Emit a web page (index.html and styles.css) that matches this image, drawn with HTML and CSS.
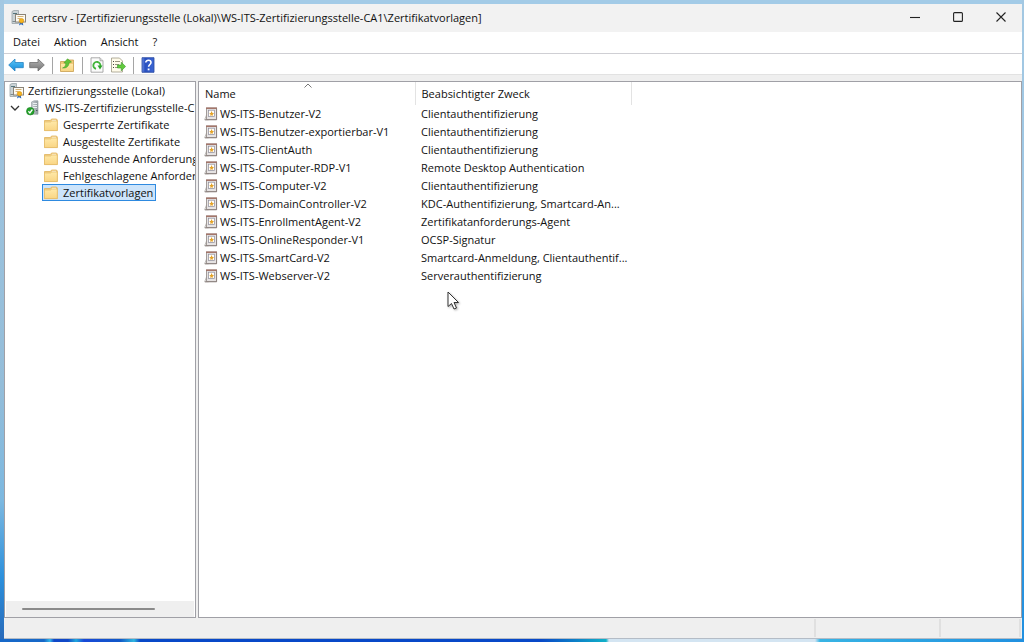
FILE: index.html
```html
<!DOCTYPE html>
<html lang="de">
<head>
<meta charset="utf-8">
<meta name="viewport" content="width=device-width, initial-scale=1">
<title>certsrv</title>
<link rel="stylesheet" href="styles.css">
</head>
<body>
<svg class="sprite" aria-hidden="true">
  <defs>
    <linearGradient id="g-folder" x1="0" y1="0" x2="0" y2="1"><stop offset="0" stop-color="#ffe9a9"/><stop offset="1" stop-color="#f9d584"/></linearGradient>
    <linearGradient id="g-blue" x1="0" y1="0" x2="0" y2="1"><stop offset="0" stop-color="#5cc8f8"/><stop offset="1" stop-color="#1288d8"/></linearGradient>
    <linearGradient id="g-grey" x1="0" y1="0" x2="0" y2="1"><stop offset="0" stop-color="#b4b4b4"/><stop offset="1" stop-color="#747474"/></linearGradient>
    <linearGradient id="g-help" x1="0" y1="0" x2="1" y2="0"><stop offset="0" stop-color="#6f8fe6"/><stop offset="0.25" stop-color="#2950c0"/><stop offset="1" stop-color="#3c66d4"/></linearGradient>
    <linearGradient id="g-server" x1="0" y1="0" x2="1" y2="0"><stop offset="0" stop-color="#c9d0d3"/><stop offset="1" stop-color="#8f999e"/></linearGradient>
  </defs>
  <symbol id="i-app" viewBox="0 0 16 16">
    <path d="M1 1.500 3 .5h4.500v13H1z" fill="#cbd3d6" stroke="#9aa4a8" stroke-width=".8"/>
    <path d="M2 3.500h4" stroke="#54747c"/>
    <path d="M1.500 11.500h3" stroke="#7c888c"/>
    <rect x="4.500" y="4.500" width="10" height="7.500" fill="#fdfbf3" stroke="#8a8378"/>
    <path d="M6.500 6.500h6M6.500 8.500h3" stroke="#d3b27c"/>
    <path d="m9 11-1 4.500 2-1.200 2.300 1.200L11.500 11z" fill="#2d6cc0"/>
    <circle cx="10.500" cy="10.800" r="2.300" fill="#f6b51e" stroke="#d68b0c" stroke-width=".6"/>
  </symbol>
  <symbol id="i-ca" viewBox="0 0 14 16">
    <path d="M5.500 2 8 .8h4v13.400H5.500z" fill="url(#g-server)" stroke="#9aa4a8" stroke-width=".7"/>
    <path d="M7 3.500h4M7 5.500h4M7 7.500h4" stroke="#e9eef0"/>
    <path d="M10 10.500h1.500" stroke="#4a5b62"/>
    <circle cx="4.300" cy="11.200" r="3.800" fill="#25a22c" stroke="#15801c" stroke-width=".6"/>
    <path d="m2.400 11.300 1.500 1.600 2.500-3.400" fill="none" stroke="#fff" stroke-width="1.300"/>
  </symbol>
  <symbol id="i-folder" viewBox="0 0 16 16">
    <path d="M1.500 3.500h6l1-1.500h5l.8 1v10.500H1.500z" fill="#f5d18a" stroke="#dfb25a" stroke-width=".8"/>
    <path d="M9 3.400h4" stroke="#fff9e8"/>
    <path d="M1.500 5h6l1.300-1h5.500v9.600H1.500z" fill="url(#g-folder)" stroke="#e4bc68" stroke-width=".7"/>
  </symbol>
  <symbol id="i-template" viewBox="0 0 14 14">
    <path d="M.6 12.800 2.500 8h2v4.800z" fill="#f1efed" stroke="#aaa6a3" stroke-width=".7"/>
    <rect x="2.500" y="1" width="10" height="11.500" fill="#e6e3e3" stroke="#99928f" stroke-width=".9"/>
    <path d="M2.100 1.200h10.900" stroke="#a0695c" stroke-width="1.300"/>
    <path d="M12.600 1.500v11.300H1" fill="none" stroke="#8b7f7c" stroke-width=".9"/>
    <rect x="4.500" y="3.200" width="6" height="6.300" fill="#fffdfa" stroke="#8b8b99" stroke-width=".7"/>
    <path d="m7.500 4 1 2h1.500L8.800 7.400l-.3 1.600-1-.7-1.300.7.300-1.600L5.300 6h1.500z" fill="#e3a32a"/>
  </symbol>
  <symbol id="i-back" viewBox="0 0 16 16">
    <path d="M.7 8 7 2v3.500h8.300v5.200H7V14z" fill="url(#g-blue)" stroke="#2683c2" stroke-width=".8"/>
  </symbol>
  <symbol id="i-forward" viewBox="0 0 16 16">
    <path d="M15.300 8 9 2v3.500H.7v5.200H9V14z" fill="url(#g-grey)" stroke="#6e6e6e" stroke-width=".8"/>
  </symbol>
  <symbol id="i-up" viewBox="0 0 16 16">
    <path d="M1.500 4.500h6L9 3h5.500v11.500h-13z" fill="#f2ca78" stroke="#c9a04f" stroke-width=".8"/>
    <path d="M2 7h12v7H2z" fill="url(#g-folder)"/>
    <path d="M3.500 11C6 10.200 6.800 8.500 6.700 6H4.800L8.500 1.800 12.500 5l-2.400.7C10 9 7.500 11.500 3.500 11z" fill="#62c238" stroke="#3d9a25" stroke-width=".5"/>
  </symbol>
  <symbol id="i-refresh" viewBox="0 0 16 16">
    <path d="M2 .8h9l3 3v11.400H2z" fill="#fbfbfb" stroke="#969696" stroke-width=".8"/>
    <path d="M11 .8v3h3" fill="#ddd" stroke="#999" stroke-width=".7"/>
    <path d="M7 11.800A3.500 3.500 0 1 1 11.300 9" fill="none" stroke="#43b53b" stroke-width="1.900"/>
    <path d="M8.500 8.500h5l-2.500 4z" fill="#2da32c"/>
  </symbol>
  <symbol id="i-export" viewBox="0 0 16 16">
    <path d="M1.500 1h8l3 3v11h-11z" fill="#fffbea" stroke="#a09b85" stroke-width=".8"/>
    <path d="M3 4.500h1M3 7.500h1M3 10.500h1" stroke="#444"/>
    <path d="M5 4.500h5M5 7.500h4M5 10.500h3" stroke="#99947f"/>
    <path d="M7.500 8h3.800V5.200l4.300 4.300-4.300 4.300V11H7.500z" fill="#62ca3d" stroke="#36992a" stroke-width=".6"/>
  </symbol>
  <symbol id="i-help" viewBox="0 0 16 16">
    <path d="M2 .7h12v14.600H2z" fill="url(#g-help)" stroke="#2748a0" stroke-width=".8"/>
    <path d="M5.800 5.500C5.800 2.500 11 2.600 11 5.500c0 2-2.400 2-2.400 4.300" fill="none" stroke="#fff" stroke-width="1.600"/>
    <path d="M7.700 11.500h1.800v1.800H7.700z" fill="#fff"/>
  </symbol>
</svg>

<main class="window">
  <header class="titlebar">
    <svg class="icon"><use href="#i-app"/></svg>
    <h1 class="title">certsrv - [Zertifizierungsstelle (Lokal)\WS-ITS-Zertifizierungsstelle-CA1\Zertifikatvorlagen]</h1>
    <div class="window-buttons">
      <button type="button" aria-label="Minimieren"><svg viewBox="0 0 10 10"><path d="M0 5.500h10"/></svg></button>
      <button type="button" aria-label="Maximieren"><svg viewBox="0 0 10 10"><rect x=".6" y=".6" width="8.800" height="8.800" rx="1"/></svg></button>
      <button type="button" aria-label="Schließen"><svg viewBox="0 0 10 10"><path d="m.5.500 9 9m0-9-9 9"/></svg></button>
    </div>
  </header>

  <nav class="menubar" aria-label="Menü">
    <button type="button">Datei</button>
    <button type="button">Aktion</button>
    <button type="button">Ansicht</button>
    <button type="button">?</button>
  </nav>

  <div class="toolbar" role="toolbar" aria-label="Symbolleiste">
    <button type="button" aria-label="Zurück"><svg class="icon"><use href="#i-back"/></svg></button>
    <button type="button" aria-label="Vorwärts"><svg class="icon"><use href="#i-forward"/></svg></button>
    <span class="divider"></span>
    <button type="button" aria-label="Übergeordneter Ordner"><svg class="icon"><use href="#i-up"/></svg></button>
    <span class="divider"></span>
    <button type="button" aria-label="Aktualisieren"><svg class="icon"><use href="#i-refresh"/></svg></button>
    <button type="button" aria-label="Liste exportieren"><svg class="icon"><use href="#i-export"/></svg></button>
    <span class="divider"></span>
    <button type="button" aria-label="Hilfe"><svg class="icon"><use href="#i-help"/></svg></button>
  </div>

  <div class="panes">
    <aside class="tree-pane">
      <ul class="tree">
        <li>
          <button type="button" class="node root"><svg class="icon"><use href="#i-app"/></svg><span>Zertifizierungsstelle (Lokal)</span></button>
          <ul>
            <li>
              <button type="button" class="node ca" aria-expanded="true"><svg class="chevron" viewBox="0 0 10 10"><path d="m1 3 4 4 4-4"/></svg><svg class="server"><use href="#i-ca"/></svg><span>WS-ITS-Zertifizierungsstelle-C</span></button>
              <ul class="folders">
                <li><button type="button" class="node"><svg class="icon"><use href="#i-folder"/></svg><span>Gesperrte Zertifikate</span></button></li>
                <li><button type="button" class="node"><svg class="icon"><use href="#i-folder"/></svg><span>Ausgestellte Zertifikate</span></button></li>
                <li><button type="button" class="node"><svg class="icon"><use href="#i-folder"/></svg><span>Ausstehende Anforderung</span></button></li>
                <li><button type="button" class="node"><svg class="icon"><use href="#i-folder"/></svg><span>Fehlgeschlagene Anforder</span></button></li>
                <li><button type="button" class="node selected"><svg class="icon"><use href="#i-folder"/></svg><span>Zertifikatvorlagen</span></button></li>
              </ul>
            </li>
          </ul>
        </li>
      </ul>
      <div class="scrollbar"><div class="thumb"></div></div>
    </aside>

    <section class="list-pane">
      <table class="list">
        <colgroup><col class="col-name"><col class="col-purpose"><col></colgroup>
        <thead>
          <tr>
            <th aria-sort="ascending"><svg class="sort" viewBox="0 0 8 5"><path d="m.5 4.500 3.500-3.500 3.500 3.500"/></svg><button type="button">Name</button></th>
            <th><button type="button">Beabsichtigter Zweck</button></th>
            <td></td>
          </tr>
        </thead>
        <tbody>
          <tr><td><div class="cell"><svg class="doc"><use href="#i-template"/></svg>WS-ITS-Benutzer-V2</div></td><td>Clientauthentifizierung</td><td></td></tr>
          <tr><td><div class="cell"><svg class="doc"><use href="#i-template"/></svg>WS-ITS-Benutzer-exportierbar-V1</div></td><td>Clientauthentifizierung</td><td></td></tr>
          <tr><td><div class="cell"><svg class="doc"><use href="#i-template"/></svg>WS-ITS-ClientAuth</div></td><td>Clientauthentifizierung</td><td></td></tr>
          <tr><td><div class="cell"><svg class="doc"><use href="#i-template"/></svg>WS-ITS-Computer-RDP-V1</div></td><td>Remote Desktop Authentication</td><td></td></tr>
          <tr><td><div class="cell"><svg class="doc"><use href="#i-template"/></svg>WS-ITS-Computer-V2</div></td><td>Clientauthentifizierung</td><td></td></tr>
          <tr><td><div class="cell"><svg class="doc"><use href="#i-template"/></svg>WS-ITS-DomainController-V2</div></td><td>KDC-Authentifizierung, Smartcard-An...</td><td></td></tr>
          <tr><td><div class="cell"><svg class="doc"><use href="#i-template"/></svg>WS-ITS-EnrollmentAgent-V2</div></td><td>Zertifikatanforderungs-Agent</td><td></td></tr>
          <tr><td><div class="cell"><svg class="doc"><use href="#i-template"/></svg>WS-ITS-OnlineResponder-V1</div></td><td>OCSP-Signatur</td><td></td></tr>
          <tr><td><div class="cell"><svg class="doc"><use href="#i-template"/></svg>WS-ITS-SmartCard-V2</div></td><td>Smartcard-Anmeldung, Clientauthentif...</td><td></td></tr>
          <tr><td><div class="cell"><svg class="doc"><use href="#i-template"/></svg>WS-ITS-Webserver-V2</div></td><td>Serverauthentifizierung</td><td></td></tr>
        </tbody>
      </table>
    </section>
  </div>

  <footer class="statusbar"><span></span><span></span><span></span></footer>
</main>
<svg class="cursor" viewBox="0 0 14 20" aria-hidden="true"><path d="M1 1v14.500l3.500-3 2.500 5.500 2.500-1-2.500-5.500h4.500z"/></svg>
</body>
</html>
```
FILE: styles.css
```css
* { box-sizing: border-box; }

body {
  margin: 0;
  min-height: 100vh;
  display: flex;
  padding: 4px 2px 3px 4px;
  font: 11px/16px "Open Sans", "Noto Sans", sans-serif;
  color: #111;
  background:
    linear-gradient(90deg, #1768c8 0, #1768c8 44px, #35b8ea 50px, #1048c8 54px, #1048c8 68px, #20a8dc 76px, #1848d8 84px, #1058c8 120px, #30b8e0 134px, #0848c8 140px, #0848c8 540px, #10b0c8 606px, #d4e5f2 609px, #d4e5f2 815px, #38b4e4 820px, #2090e0 100%) bottom / 100% 3px no-repeat,
    linear-gradient(#a3c8e2 0, #94bdd9 60%, #7cb8e0 78%, #2c90dc 90%, #2868b8 100%) left / 4px 100% no-repeat,
    linear-gradient(#a3c8e2 0, #9ac6e6 45%, #3a98dc 65%, #2090e0 100%) right / 2px 100% no-repeat,
    #a3cbe7;
}

ul { list-style: none; margin: 0; padding: 0; }

button {
  border: 0;
  padding: 0;
  background: none;
  font: inherit;
  color: inherit;
  white-space: nowrap;
}

.sprite { position: absolute; width: 0; height: 0; }
.icon { width: 16px; height: 16px; flex: none; }

.window {
  flex: 1;
  min-width: 0;
  display: flex;
  flex-direction: column;
  background: #efefef;
  border-bottom: 1px solid #b4bcc6;
}

.titlebar {
  display: flex;
  align-items: center;
  height: 28px;
  padding-left: 7px;
  gap: 5px;
  background: #f2f2f2;
}
.title {
  flex: 1;
  min-width: 0;
  margin: 0;
  font: inherit;
  white-space: nowrap;
  overflow: hidden;
}
.window-buttons { display: flex; align-self: stretch; }
.window-buttons button {
  width: 43px;
  display: flex;
  align-items: center;
  justify-content: center;
  padding-bottom: 2px;
}
.window-buttons svg {
  width: 10px;
  height: 10px;
  fill: none;
  stroke: #222;
  stroke-width: 1.1;
}

.menubar {
  display: flex;
  align-items: center;
  gap: 14px;
  height: 22px;
  padding: 0 0 2px 9px;
  background: #fff;
  border-bottom: 1px solid #cfcfd4;
}

.toolbar {
  display: flex;
  align-items: center;
  gap: 5px;
  height: 21px;
  padding: 2px 0 0 4px;
  background: #fff;
  border-bottom: 1px solid #e2e2e2;
}
.toolbar button { display: flex; }
.divider { width: 1px; height: 17px; margin-left: 2px; background: #a5a5a5; }
.divider + button { margin-left: 1px; }

.panes {
  flex: 1;
  display: grid;
  grid-template-columns: 192px minmax(0, 1fr);
  gap: 2px;
  padding-top: 6px;
}
.tree-pane, .list-pane {
  background: #fff;
  border: 1px solid #a0a0a6;
  min-width: 0;
}
.tree-pane { display: flex; flex-direction: column; overflow: hidden; }
.tree { flex: 1; }

.node {
  display: flex;
  align-items: center;
  height: 17px;
}
.root { padding-left: 4px; gap: 3px; }
.ca { padding-left: 5px; gap: 5px; }
.server { width: 14px; height: 16px; flex: none; margin-left: 1px; }
.chevron {
  width: 10px;
  height: 10px;
  flex: none;
  fill: none;
  stroke: #333;
  stroke-width: 1.3;
}
.folders { padding-left: 37px; }
.folders .node { gap: 4px; padding: 0 3px 0 1px; }
.folders .selected {
  padding: 0 2px 0 0;
  border: 1px solid #2e8ae0;
  background: #cce4fb;
}

.scrollbar { height: 16px; margin: 0 1px; padding: 7px 39px 0 16px; background: #efefef; }
.thumb { height: 2px; background: #8a8a8a; border-radius: 1px; }

.list {
  width: 100%;
  table-layout: fixed;
  border-collapse: collapse;
}
.col-name, .col-purpose { width: 216px; }
.list th, .list td {
  padding: 0 0 0 6px;
  text-align: left;
  font-weight: 400;
  white-space: nowrap;
}
.list thead tr { height: 23px; }
.list th { position: relative; border-right: 1px solid #e3e3e3; }
.list tbody tr { height: 18px; }
.sort {
  position: absolute;
  top: 1px;
  left: 105px;
  width: 8px;
  height: 5px;
  fill: none;
  stroke: #777;
}
.list .cell { display: flex; align-items: center; gap: 2px; margin-left: -1px; }
.doc { width: 14px; height: 14px; flex: none; }

.statusbar {
  display: grid;
  grid-template-columns: 1fr 125px 80px;
  height: 20px;
  padding: 1px 1px 1px 0;
}
.statusbar span { border-right: 2px solid #e0e0e0; }

.cursor {
  position: absolute;
  left: 447px;
  top: 291px;
  width: 14px;
  height: 20px;
  fill: #fff;
  stroke: #333;
  filter: drop-shadow(1px 1px 1px #0005);
}
```
